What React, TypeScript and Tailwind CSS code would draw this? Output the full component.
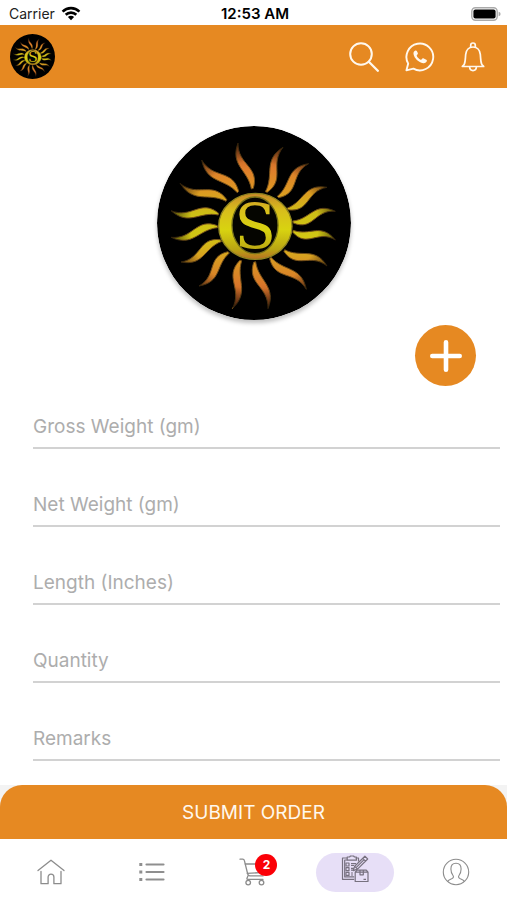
import { useId } from "react";

type Point = [number, number];

// Each flame runs from its base on the ring to its tip.
const RAYS: [Point, Point][] = [
  [[308, 212], [265, 75]],
  [[350, 222], [400, 88]],
  [[385, 237], [477, 137]],
  [[414, 273], [532, 208]],
  [[430, 312], [557, 280]],
  [[430, 340], [557, 366]],
  [[404, 398], [532, 444]],
  [[362, 420], [470, 514]],
  [[315, 432], [355, 572]],
  [[273, 428], [248, 572]],
  [[237, 403], [148, 504]],
  [[214, 368], [94, 432]],
  [[204, 326], [64, 358]],
  [[206, 288], [64, 278]],
  [[230, 247], [92, 197]],
  [[265, 222], [156, 126]],
];

function flame([base, tip]: [Point, Point]) {
  const dx = tip[0] - base[0];
  const dy = tip[1] - base[1];
  const length = Math.hypot(dx, dy);
  const nx = -dy / length;
  const ny = dx / length;
  const at = (t: number, side: number) =>
    `${(base[0] + dx * t + nx * side).toFixed(1)} ${(base[1] + dy * t + ny * side).toFixed(1)}`;
  return `M${at(0, 3)}C${at(0.4, 42)} ${at(0.55, -21)} ${at(1, 0)}C${at(0.6, -44)} ${at(0.4, 5)} ${at(0, -3)}Z`;
}

function SunLogo({ className }: { className: string }) {
  const id = useId().replace(/[^a-zA-Z0-9]/g, "");
  return (
    <svg viewBox="22 24 582 582" className={className} role="img" aria-label="OS sun logo">
      <defs>
        <linearGradient id={`${id}r`} gradientUnits="userSpaceOnUse" x1="0" y1="70" x2="0" y2="575">
          <stop offset="0" stopColor="#a64d20" />
          <stop offset="0.16" stopColor="#df7c2c" />
          <stop offset="0.3" stopColor="#dd9a22" />
          <stop offset="0.43" stopColor="#cdbf16" />
          <stop offset="0.57" stopColor="#d2c514" />
          <stop offset="0.7" stopColor="#d99b22" />
          <stop offset="0.85" stopColor="#d9772a" />
          <stop offset="1" stopColor="#a64d20" />
        </linearGradient>
        <linearGradient id={`${id}o`} x1="0" y1="0" x2="0" y2="1">
          <stop offset="0" stopColor="#c98a2a" />
          <stop offset="0.25" stopColor="#d8bd1c" />
          <stop offset="0.55" stopColor="#d8d310" />
          <stop offset="0.85" stopColor="#b9a513" />
          <stop offset="1" stopColor="#b86f24" />
        </linearGradient>
        <radialGradient id={`${id}f`} gradientUnits="userSpaceOnUse" cx="314" cy="322" r="255">
          <stop offset="0.75" stopColor="#000" stopOpacity="0" />
          <stop offset="1" stopColor="#000" stopOpacity="0.65" />
        </radialGradient>
      </defs>
      <circle cx="313" cy="315" r="291" fill="#000" />
      <g fill={`url(#${id}r)`} stroke="#75501a" strokeWidth="3">
        {RAYS.map((ray) => (
          <path key={ray[1].join()} d={flame(ray)} />
        ))}
      </g>
      <circle cx="314" cy="322" r="255" fill={`url(#${id}f)`} />
      <ellipse cx="317" cy="325" rx="110" ry="99" fill={`url(#${id}o)`} stroke="#8f8420" strokeWidth="4" />
      <ellipse cx="316" cy="322" rx="69" ry="85" fill="#050500" stroke="#75701a" strokeWidth="4" />
      <text
        x="317"
        y="390"
        textAnchor="middle"
        fontSize="184"
        fill={`url(#${id}o)`}
        className="font-['DejaVu_Serif',serif]"
      >
        S
      </text>
    </svg>
  );
}

function WifiIcon() {
  return (
    <svg viewBox="0 0 20 15" className="h-[15px] w-5" fill="none" stroke="#000" strokeWidth="2.6" aria-hidden="true">
      <path d="M1.6 5.6a12 12 0 0 1 16.8 0" />
      <path d="M4.7 8.8a7.6 7.6 0 0 1 10.6 0" />
      <path d="M10 14.2 6.9 11.1a4.4 4.4 0 0 1 6.2 0Z" fill="#000" stroke="none" />
    </svg>
  );
}

function BatteryIcon() {
  return (
    <svg viewBox="0 0 30 14" className="h-[14px] w-[30px]" aria-hidden="true">
      <rect x="0.8" y="0.8" width="25.4" height="12.4" rx="3.6" fill="#fff" stroke="#aaa" strokeWidth="1.4" />
      <rect x="2.4" y="2.4" width="22.2" height="9.2" rx="2" fill="#000" />
      <path d="M27.6 4.8q2 .5 2 2.2t-2 2.2Z" fill="#aaa" />
    </svg>
  );
}

function SearchIcon() {
  return (
    <svg viewBox="0 0 30 30" className="size-[30px]" fill="none" stroke="#fff8ee" strokeWidth="2" strokeLinecap="round" aria-hidden="true">
      <circle cx="12" cy="12" r="10.8" />
      <path d="m19.800 19.800 9 9" strokeWidth="2.300" />
    </svg>
  );
}

function WhatsAppIcon() {
  return (
    <svg viewBox="0 0 30 30" className="size-[30px]" aria-hidden="true">
      <path
        d="M1.4 28.4 3.2 21.6A13.4 13.4 0 1 1 8.4 26.7Z"
        fill="none"
        stroke="#fff8ee"
        strokeWidth="1.9"
        strokeLinejoin="round"
      />
      <path
        d="M10.5 8.5c-1.3.3-2.3 1.8-2 3.5.8 4.300 5 8.500 9.700 9.200 1.700.2 3.400-.8 3.700-2.100.1-.6-.1-1-.6-1.300l-2.500-1.400c-.5-.3-1-.2-1.400.2l-.9 1c-.3.300-.600.300-1 .1-1.700-.9-2.900-2.100-3.700-3.700-.2-.4-.1-.7.2-1l.6-.7c.300-.4.400-.7.200-1.200l-1-2.100c-.3-.5-.7-.7-1.300-.5Z"
        fill="#fff8ee"
      />
    </svg>
  );
}

function BellIcon() {
  return (
    <svg
      viewBox="0 0 24 30"
      className="h-[30px] w-6"
      fill="none"
      stroke="#fff8ee"
      strokeWidth="1.7"
      strokeLinecap="round"
      strokeLinejoin="round"
      aria-hidden="true"
    >
      <path d="M9.700 4.700V3.300a2.300 2.300 0 0 1 4.600 0v1.400" />
      <path d="M12 5c-4 0-6.900 3-7.300 7.300-.4 4.200-.3 7.700-1.400 9.900-.4.900-1.200 1.500-2 2.300h21.400c-.8-.8-1.600-1.400-2-2.300-1.100-2.200-1-5.700-1.400-9.900C18.900 8 16 5 12 5Z" />
      <path d="M8.600 24.800c.1 2.300 1.500 3.800 3.400 3.800s3.300-1.500 3.400-3.800" />
    </svg>
  );
}

function HomeIcon() {
  return (
    <svg viewBox="0 0 28 26" className="h-[26px] w-7" fill="none" stroke="#8c8c8c" strokeWidth="1.300" strokeLinejoin="round" strokeLinecap="round" aria-hidden="true">
      <path d="M1 11.500 14 1.200 27 11.500" />
      <path d="M4 12.400v12.300h7.100v-6.600a2.900 2.900 0 0 1 5.800 0v6.600H24V12.400" />
    </svg>
  );
}

function ListIcon() {
  return (
    <svg viewBox="0 0 26 20" className="h-5 w-[26px]" fill="none" stroke="#8f8f8f" aria-hidden="true">
      <path d="M7.500 2.500h17M7.500 10h17M7.500 17.500h17" strokeWidth="2.200" strokeLinecap="round" />
      <path d="M.3 2.500h3M.3 10h3M.3 17.500h3" strokeWidth="2.800" />
    </svg>
  );
}

function CartIcon() {
  return (
    <svg viewBox="0 0 28 28" className="size-7" fill="none" stroke="#8c8c8c" strokeWidth="1.300" strokeLinejoin="round" strokeLinecap="round" aria-hidden="true">
      <path d="M1 1.200h2.700c1.100 0 1.500.600 1.700 1.500L8.700 16c.3 1.300 1 1.900 2.200 1.900H24" />
      <path d="M6.300 6h20l-2.100 8.400L8.300 15.400M9 17.800l-1 2.500c-.200.700.1 1 .7 1H24" />
      <circle cx="9.200" cy="24.600" r="2.300" />
      <circle cx="22.500" cy="24.600" r="2.300" />
    </svg>
  );
}

function OrderIcon() {
  return (
    <svg viewBox="0 0 28 28" className="size-7" fill="none" stroke="#77717f" strokeWidth="1.200" strokeLinejoin="round" aria-hidden="true">
      <path d="M13.200 24.300H1.500V3h4.600M14.500 3h3v3.500M13.200 21.900H3.700V5h2.600" />
      <path d="M6.200 2h2.300l1-1h3l1 1h1.900v3.200H6.200Z" />
      <path d="M5 8h3v3H5ZM5 12.700h3v3H5ZM5 17.400h3v3H5ZM10 8.600h5M10 10.500h3M10 13.300h3M10 15.200h2M10 18h2M10 20h2" />
      <path d="m12.200 15.600 1.500-4.300L23.900 1.200l2.800 2.800-10.200 10.100ZM13.700 11.300l2.800 2.800M21.700 3.400l2.800 2.800M15.100 12.700l8-8" />
      <path d="M14.200 17.200 16 15.100h9.300l1.700 2.100v9.300H14.200ZM14.200 17.200H27M19 15.300v4.500h3.300v-4.500M22.500 24.300h2.500" />
    </svg>
  );
}

function ProfileIcon() {
  return (
    <svg viewBox="0 0 28 28" className="size-7" fill="none" stroke="#8c8c8c" strokeWidth="1.100" strokeLinejoin="round" aria-hidden="true">
      <circle cx="14" cy="14" r="12.700" />
      <path d="M5.600 23.500c.6-1.700 2.600-2.300 4.500-3 1.500-.6 1.700-1.900.9-3-1.300-1.700-2.100-4-2.100-6.500 0-3.700 2-5.800 5.100-5.800s5.100 2.100 5.100 5.800c0 2.500-.8 4.800-2.100 6.500-.8 1.100-.6 2.400.9 3 1.900.7 3.900 1.300 4.500 3" />
    </svg>
  );
}

const FIELDS = [
  { id: "gross-weight", label: "Gross Weight (gm)" },
  { id: "net-weight", label: "Net Weight (gm)" },
  { id: "length", label: "Length (Inches)" },
  { id: "quantity", label: "Quantity" },
  { id: "remarks", label: "Remarks" },
];

export default function App() {
  return (
    <div className="flex min-h-screen flex-col bg-white font-['Inter',sans-serif]">
      <div className="grid h-[25px] grid-cols-3 items-center pt-0.5 pr-1.5 pl-[9px] text-sm text-[#222]">
        <div className="flex items-center gap-1.5">
          <span>Carrier</span>
          <WifiIcon />
        </div>
        <time className="text-center text-[15px] font-semibold text-black">12:53 AM</time>
        <div className="flex justify-end">
          <BatteryIcon />
        </div>
      </div>

      <header className="flex h-[63px] items-center justify-between bg-[#e68922] pr-[22px] pl-2.5">
        <a href="#home" aria-label="Home">
          <SunLogo className="size-[45px]" />
        </a>
        <div className="flex items-center gap-[26px]">
          <button type="button" aria-label="Search">
            <SearchIcon />
          </button>
          <button type="button" aria-label="WhatsApp">
            <WhatsAppIcon />
          </button>
          <button type="button" aria-label="Notifications">
            <BellIcon />
          </button>
        </div>
      </header>

      <main className="flex flex-1 flex-col pt-[38px]">
        <SunLogo className="size-[194px] self-center rounded-full shadow-[0_3px_4px_rgba(0,0,0,0.25)]" />
        <button
          type="button"
          aria-label="Add item"
          className="mt-[5px] mr-[31px] flex size-[61px] items-center justify-center self-end rounded-full bg-[#e68922]"
        >
          <svg viewBox="0 0 32 32" className="size-8" stroke="#fff" strokeWidth="4.600" strokeLinecap="round" aria-hidden="true">
            <path d="M16 2.300v27.400M2.300 16h27.400" />
          </svg>
        </button>
        <form id="order" className="flex flex-col gap-[30px] pt-[15px] pr-[7px] pb-6 pl-[33px]">
          {FIELDS.map((field) => (
            <div key={field.id} className="grid h-12 border-b-2 border-[#d2d2d2] text-[19px] leading-7">
              <input
                id={field.id}
                type="text"
                placeholder=" "
                className="peer col-start-1 row-start-1 w-full bg-transparent pt-1.5 text-[#333] outline-none"
              />
              <label
                htmlFor={field.id}
                className="pointer-events-none col-start-1 row-start-1 self-center pt-1.5 text-[#adadad] peer-[:not(:placeholder-shown)]:invisible"
              >
                {field.label}
              </label>
            </div>
          ))}
        </form>
      </main>

      <footer>
        <div className="bg-[#f3f3f3]">
          <button
            type="submit"
            form="order"
            className="h-[54px] w-full rounded-t-[22px] bg-[#e68922] pt-0.5 text-[19px] text-[#fff8ee]"
          >
            SUBMIT ORDER
          </button>
        </div>
        <nav className="grid h-[61px] grid-cols-5 items-center pt-1">
          <a href="#home" aria-label="Home" className="flex justify-center">
            <HomeIcon />
          </a>
          <a href="#list" aria-label="Catalogue" className="flex justify-center">
            <ListIcon />
          </a>
          <a href="#cart" aria-label="Cart, 2 items" className="flex justify-center">
            <span className="relative">
              <CartIcon />
              <span className="absolute -top-1 -right-2.5 flex size-[22px] items-center justify-center rounded-full bg-[#fb0007] text-xs font-bold text-white">
                2
              </span>
            </span>
          </a>
          <a href="#order" aria-label="Order" aria-current="page" className="mx-auto mt-0.5 flex h-[39px] w-[78px] justify-center rounded-full bg-[#e7dff7] pt-0.5">
            <OrderIcon />
          </a>
          <a href="#profile" aria-label="Profile" className="flex justify-center">
            <ProfileIcon />
          </a>
        </nav>
      </footer>
    </div>
  );
}
